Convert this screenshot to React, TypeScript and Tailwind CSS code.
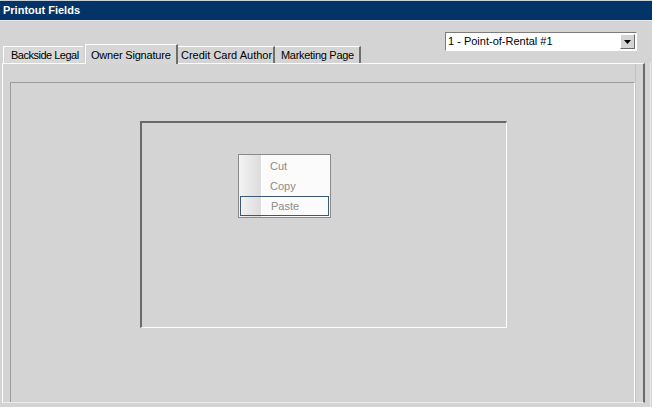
import React from "react";

const font = { fontFamily: '"Liberation Sans", Arial, sans-serif' };

function Tab({ label, width, selected, textPad }: { label: string; width: string; selected?: boolean; textPad: string }) {
  return (
    <div
      className={
        selected
          ? `${width} shrink-0 whitespace-nowrap h-[20px] border-t border-l border-white border-r-2 border-r-[#6e6e6e] bg-[#d6d6d6] ${textPad} pt-[3px] leading-[14px] text-[11px] text-black relative top-px z-10`
          : `${width} shrink-0 whitespace-nowrap h-[17px] border-t border-white border-r-2 border-r-[#6e6e6e] bg-[#d4d4d4] ${textPad} pt-[2px] leading-[13px] text-[11px] text-black`
      }
    >
      {label}
    </div>
  );
}

export default function App() {
  return (
    <div className="w-[652px] h-[407px] bg-[#d4d4d4] overflow-hidden flex flex-col" style={font}>
      <div className="h-px bg-[#c8d0da]" />
      <div className="h-[19px] bg-[#033468] text-white font-bold text-[11px] leading-[19px] pl-[3px]">Printout Fields</div>
      <div className="h-[43px] flex justify-between border-t border-[#e8e8e8]">
        <div className="flex items-end pl-[3px]">
          <div className="w-[80px] shrink-0 whitespace-nowrap h-[17px] border-t border-l border-white bg-[#d9d9d9] pl-[7px] pt-[2px] leading-[13px] text-[11px] tracking-[-0.5px] text-black">Backside Legal</div>
          <div className="w-[2px] shrink-0" />
          <Tab label="Owner Signature" width="w-[93px] tracking-[-0.2px]" selected textPad="pl-[5px]" />
          <Tab label="Credit Card Author" width="w-[97px]" textPad="pl-[3px]" />
          <Tab label="Marketing Page" width="w-[86px] tracking-[-0.3px]" textPad="pl-[6px]" />
        </div>
        <div className="mt-[11px] mr-[15px] w-[192px] h-[19px] border-t border-l border-[#7c7c7c] border-r border-b border-r-white border-b-white bg-white flex items-center justify-between">
          <span className="pl-[2px] text-[11px] leading-[13px] text-black whitespace-nowrap">1 - Point-of-Rental #1</span>
          <div className="w-[15px] h-[15px] mr-px bg-[#d4d4d4] border-t border-l border-white border-r border-b border-r-[#6a6a6a] border-b-[#6a6a6a] flex items-center justify-center">
            <svg width="7" height="4" viewBox="0 0 7 4"><path d="M0 0h7L3.5 4z" fill="#000" /></svg>
          </div>
        </div>
      </div>
      <div className="flex flex-1">
        <div className="ml-[2px] w-[643px] h-[340px] border-t border-l border-white border-r-2 border-r-[#6a6a6a] border-b border-b-[#ececec] flex">
          <div className="w-[633px] border-r border-[#c2c2c2] pl-[7px] pt-[18px] flex">
            <div className="w-[622px] flex-1 border-t border-l border-[#9c9c9c] border-r border-r-white pl-[129px] pt-[38px]">
              <div className="relative w-[367px] h-[207px] border-t-2 border-l-2 border-[#6a6a6a] border-r border-b border-r-white border-b-white">
                <div className="absolute left-[96px] top-[31px] w-[93px] h-[64px] border border-[#8a8a8a] bg-[#fbfbfb] flex py-px">
                  <div className="absolute left-0 top-0 bottom-0 w-[23px] bg-gradient-to-r from-[#f4f4f4] to-[#dcdcdc] border-r border-white" />
                  <div className="relative flex-1 flex flex-col">
                    {["Cut", "Copy"].map((t) => (
                      <div key={t} className="h-[20px] pl-[31px] text-[11px] leading-[20px] text-[#8c8c8c]">{t}</div>
                    ))}
                    <div className="h-[20px] mx-px border border-[#3c5878] pl-[30px] text-[11px] leading-[18px] text-[#8c8c8c]">Paste</div>
                  </div>
                </div>
              </div>
            </div>
          </div>
        </div>
        <div className="ml-[5px] w-px bg-[#ececec]" />
      </div>
    </div>
  );
}
